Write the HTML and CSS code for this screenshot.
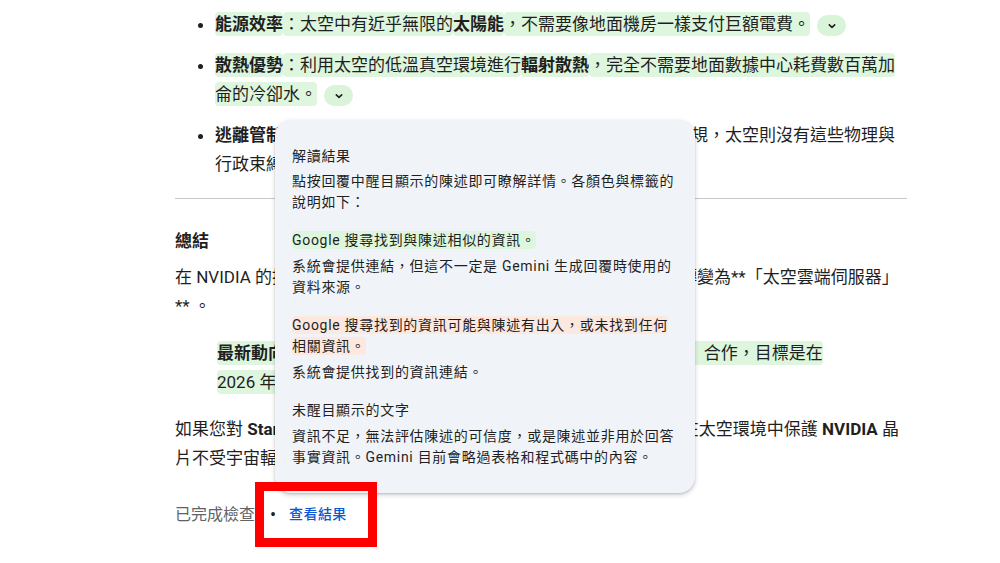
FILE: index.html
```html
<!DOCTYPE html>
<html lang="zh-Hant">
<head>
  <meta charset="UTF-8" />
  <meta name="viewport" content="width=device-width, initial-scale=1.0"/>
  <title>Gemini 回覆 • 再次確認</title>
  <link rel="stylesheet" href="styles.css">
</head>
<body>
<main class="answer">
  <ul class="points">
    <li>
      <span class="hl"><strong>能源效率</strong></span><span class="hl">：太空中有近乎無限的</span><span class="hl"><strong>太陽能</strong></span><span class="hl">，不需要像地面機房一樣支付巨額電費。</span><button class="chip"><svg width="10" height="10" viewBox="0 0 10 10"><path d="M2.3 3.8 L5 6.4 L7.7 3.8" fill="none" stroke="#1f1f1f" stroke-width="1.6" stroke-linecap="round" stroke-linejoin="round"/></svg></button>
    </li>
    <li>
      <span class="hl"><strong>散熱優勢</strong></span><span class="hl">：利用太空的低溫真空環境進行</span><span class="hl"><strong>輻射散熱</strong></span><span class="hl">，完全不需要地面數據中心耗費數百萬加侖的冷卻水。</span><button class="chip"><svg width="10" height="10" viewBox="0 0 10 10"><path d="M2.3 3.8 L5 6.4 L7.7 3.8" fill="none" stroke="#1f1f1f" stroke-width="1.6" stroke-linecap="round" stroke-linejoin="round"/></svg></button>
    </li>
    <li>
      <strong>逃離管制</strong>：地面數據中心往往受到土地、電力以及環保等各種法規，太空則沒有這些物理與行政束縛。
    </li>
  </ul>

  <hr class="divider">

  <h3 class="summary">總結</h3>
  <p>在 NVIDIA 的推動下，太空運算已由實驗室走向商業化，晶片由地面轉變為**「太空雲端伺服器」** 。</p>

  <blockquote class="news">
    <span class="hl"><strong>最新動向</strong>：NVIDIA 已與新創公司 Starcloud（原名 Lumen Orbit）合作，目標是在 2026 年將搭載 H100 GPU 的衛星送上軌道。</span>
  </blockquote>

  <p>如果您對 <strong>Starcloud</strong> 的抗輻射技術很有興趣，我可以再說明他們如何在太空環境中保護 <strong>NVIDIA</strong> 晶片不受宇宙輻射影響的細節。</p>

  <div class="check-row">
    <span class="check-done">已完成檢查</span>
    <span class="dot">•</span>
    <a class="check-link" href="#">查看結果</a>
  </div>
</main>

<div class="popup">
  <div class="popup-title">解讀結果</div>
  <div class="popup-text">點按回覆中醒目顯示的陳述即可瞭解詳情。各顏色與標籤的說明如下：</div>

  <div class="legend">
    <span class="tag tag-green">Google 搜尋找到與陳述相似的資訊。</span>
    <div class="legend-desc">系統會提供連結，但這不一定是 Gemini 生成回覆時使用的資料來源。</div>
  </div>

  <div class="legend">
    <span class="tag tag-orange">Google 搜尋找到的資訊可能與陳述有出入，或未找到任何相關資訊。</span>
    <div class="legend-desc">系統會提供找到的資訊連結。</div>
  </div>

  <div class="legend">
    <div class="legend-plain">未醒目顯示的文字</div>
    <div class="legend-desc">資訊不足，無法評估陳述的可信度，或是陳述並非用於回答事實資訊。Gemini 目前會略過表格和程式碼中的內容。</div>
  </div>
</div>

<div class="annotation"></div>
</body>
</html>
```

FILE: styles.css
```css
body {
  margin: 0;
  padding: 10px 0 0 175px;
  background: #ffffff;
  color: #1f1f1f;
  font-family: Roboto, "Noto Sans CJK TC", sans-serif;
  font-size: 17px;
  line-height: 29px;
}

.answer {
  width: 732px;
}

strong {
  font-weight: 700;
}

.points {
  margin: 0;
  padding-left: 40px;
}

.points li {
  margin-bottom: 12px;
}

.hl {
  background: #ddf6dd;
  border-radius: 4px;
  padding: 2px 0;
  -webkit-box-decoration-break: clone;
  box-decoration-break: clone;
}

.chip {
  display: inline-flex;
  align-items: center;
  justify-content: center;
  width: 29px;
  height: 21px;
  margin-left: 7px;
  padding: 0;
  border: none;
  border-radius: 11px;
  background: #d9f4d9;
  vertical-align: middle;
  cursor: pointer;
}

.divider {
  border: none;
  border-top: 1px solid #c7c9cc;
  margin: 19px 0 28px;
}

.summary {
  margin: 0 0 7px;
  font-size: 17px;
  font-weight: 700;
}

p {
  margin: 0;
}

.news {
  margin: 18px 44px 18px 42px;
}

.check-row {
  display: flex;
  align-items: center;
  gap: 12px;
  margin-top: 27px;
}

.check-done {
  color: #5f6368;
  font-size: 16px;
}

.dot {
  color: #1f1f1f;
  font-size: 18px;
  margin-left: 3px;
}

.check-link {
  color: #0b57d0;
  font-size: 14px;
  font-weight: 500;
  letter-spacing: 0.4px;
  text-decoration: none;
  margin-left: 1px;
}

/* info popup laid over the answer */
.popup {
  position: absolute;
  left: 275px;
  top: 120px;
  width: 420px;
  height: 373px;
  box-sizing: border-box;
  padding: 26px 17px;
  background: #f0f4f9;
  border-radius: 16px;
  box-shadow: 0 2px 5px rgba(0,0,0,0.18), 0 1px 2px rgba(0,0,0,0.12);
  font-size: 14px;
  letter-spacing: 0.7px;
  line-height: 21px;
}

.popup-title {
  margin-bottom: 4px;
}

.legend {
  margin-top: 17px;
}

.tag {
  border-radius: 4px;
  padding: 1px 0;
  -webkit-box-decoration-break: clone;
  box-decoration-break: clone;
}

.tag-green {
  background: #ddf6dd;
}

.tag-orange {
  background: #fce8de;
}

.legend-desc {
  margin-top: 5px;
}

/* red annotation mark */
.annotation {
  position: absolute;
  left: 255px;
  top: 482px;
  width: 122px;
  height: 65px;
  box-sizing: border-box;
  border: 9px solid #ff0000;
}
```
